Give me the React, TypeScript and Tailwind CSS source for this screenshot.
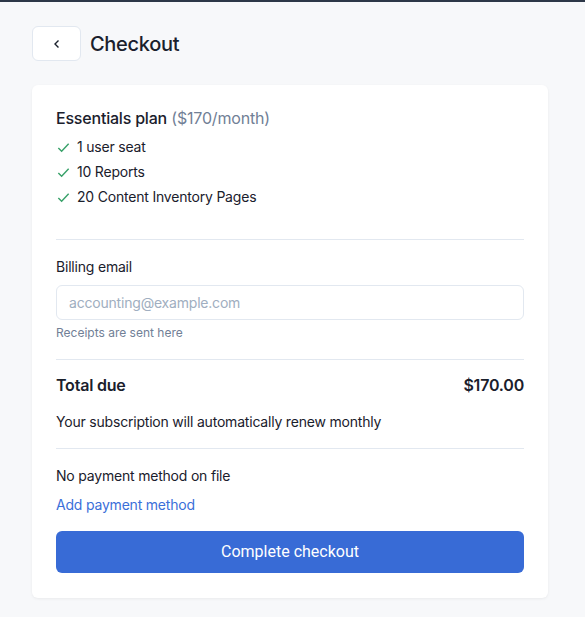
export default function App() {
  const features = ['1 user seat', '10 Reports', '20 Content Inventory Pages'];

  return (
    <div className="min-h-[617px] bg-[#f7f8fa] font-['Inter',sans-serif] tracking-[-0.2px] text-[#1a202c]">
      <div className="h-[2px] bg-[#2d3748]" />
      <div className="px-8 pt-6">
        {/* header */}
        <div className="flex items-center gap-[9px]">
          <button className="flex h-[35px] w-[49px] items-center justify-center rounded-md border border-[#e2e8f0] bg-white">
            <svg width="12" height="12" viewBox="0 0 12 12" fill="none" stroke="#1a202c" strokeWidth="1.4">
              <path d="M7.5 2.5 4 6l3.5 3.5" />
            </svg>
          </button>
          <h1 className="text-[20px] font-medium tracking-[-0.3px] text-[#1a202c]">Checkout</h1>
        </div>

        {/* card */}
        <div className="mt-6 w-[516px] rounded-md bg-white px-6 pt-6 pb-[25px] shadow-[0_1px_3px_rgba(0,0,0,0.06)]">
          <div className="text-[16px] leading-[18px]">
            <span className="font-medium">Essentials plan</span>{' '}
            <span className="text-[#718096]">($170/month)</span>
          </div>
          <ul className="mt-[11px] flex flex-col gap-[7px] text-[14px] leading-[18px]">
            {features.map((f) => (
              <li key={f} className="flex items-center gap-[6px]">
                <svg width="15" height="15" viewBox="0 0 16 16" fill="none" stroke="#38a169" strokeWidth="1.5">
                  <path d="M2.5 8.5 6 12l7.5-8" />
                </svg>
                {f}
              </li>
            ))}
          </ul>

          <div className="mt-[33px] h-px bg-[#e2e8f0]" />

          <div className="mt-[17px] text-[14px] leading-[20px]">Billing email</div>
          <input
            placeholder="accounting@example.com"
            className="mt-[8px] block h-[35px] w-full rounded-md border border-[#e2e8f0] px-3 text-[14px] outline-none placeholder:text-[#a0aec0]"
          />
          <div className="mt-[5px] text-[12px] leading-[16px] tracking-normal text-[#718096]">Receipts are sent here</div>

          <div className="mt-[18px] h-px bg-[#e2e8f0]" />

          <div className="mt-[15px] flex items-center justify-between text-[16px] font-semibold leading-[20px]">
            <span>Total due</span>
            <span>$170.00</span>
          </div>
          <div className="mt-[17px] text-[14px] leading-[20px]">Your subscription will automatically renew monthly</div>

          <div className="mt-[16px] h-px bg-[#e2e8f0]" />

          <div className="mt-[17px] text-[14px] leading-[20px]">No payment method on file</div>
          <a className="mt-[9px] block text-[14px] leading-[20px] text-[#3b6fd9]">Add payment method</a>
          <button className="mt-[16px] flex h-[42px] w-full items-center justify-center rounded-md bg-[#386bd6] font-['Roboto',sans-serif] text-[16px] tracking-normal text-white">
            Complete checkout
          </button>
        </div>
      </div>
    </div>
  );
}
